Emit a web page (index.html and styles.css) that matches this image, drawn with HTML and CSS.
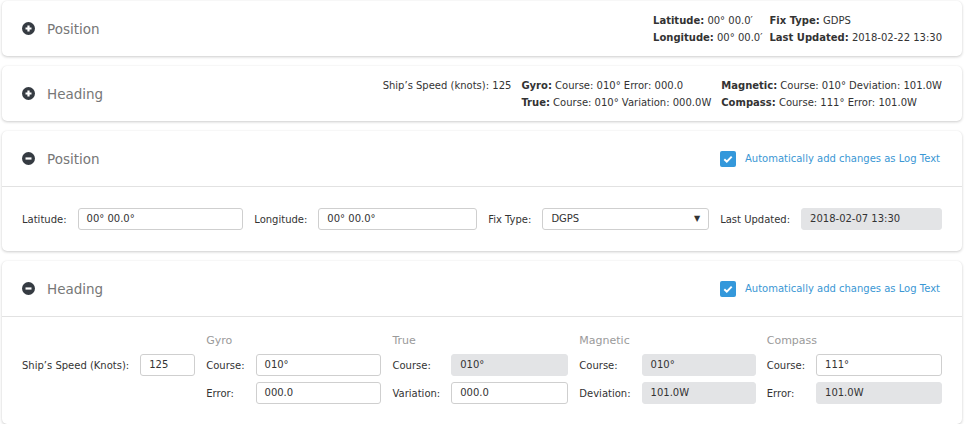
FILE: index.html
```html
<!DOCTYPE html>
<html>
<head>
<meta charset="utf-8">
<link rel="stylesheet" href="styles.css">
</head>
<body>
<div class="page">

  <section class="card">
    <header class="card-head">
      <div class="title">
        <svg class="toggle" width="13" height="13" viewBox="0 0 13 13"><circle cx="6.5" cy="6.5" r="6.5" fill="#353b42"/><path d="M3.5 6.5h6M6.5 3.5v6" stroke="#fff" stroke-width="2.2"/></svg>
        <h2>Position</h2>
      </div>
      <div class="summary pos-summary">
        <div><b>Latitude:</b> 00° 00.0′</div>
        <div><b>Fix Type:</b> GDPS</div>
        <div><b>Longitude:</b> 00° 00.0′</div>
        <div><b>Last Updated:</b> 2018-02-22 13:30</div>
      </div>
    </header>
  </section>

  <section class="card">
    <header class="card-head">
      <div class="title">
        <svg class="toggle" width="13" height="13" viewBox="0 0 13 13"><circle cx="6.5" cy="6.5" r="6.5" fill="#353b42"/><path d="M3.5 6.5h6M6.5 3.5v6" stroke="#fff" stroke-width="2.2"/></svg>
        <h2>Heading</h2>
      </div>
      <div class="summary head-summary">
        <div>Ship’s Speed (knots): 125</div>
        <div><b>Gyro:</b> Course: 010° Error: 000.0</div>
        <div><b>Magnetic:</b> Course: 010° Deviation: 101.0W</div>
        <div></div>
        <div><b>True:</b> Course: 010° Variation: 000.0W</div>
        <div><b>Compass:</b> Course: 111° Error: 101.0W</div>
      </div>
    </header>
  </section>

  <section class="card">
    <header class="card-head open">
      <div class="title">
        <svg class="toggle" width="13" height="13" viewBox="0 0 13 13"><circle cx="6.5" cy="6.5" r="6.5" fill="#353b42"/><path d="M3.5 6.5h6" stroke="#fff" stroke-width="2.2"/></svg>
        <h2>Position</h2>
      </div>
      <label class="auto-log">
        <span class="check"><svg width="16" height="16" viewBox="0 0 16 16"><path d="M4.3 8.2l2.5 2.4 4.9-5" fill="none" stroke="#fff" stroke-width="2"/></svg></span>
        Automatically add changes as Log Text
      </label>
    </header>
    <div class="card-body pos-form">
      <span class="lbl">Latitude:</span>
      <div class="field">00° 00.0°</div>
      <span class="lbl">Longitude:</span>
      <div class="field">00° 00.0°</div>
      <span class="lbl">Fix Type:</span>
      <div class="field select">DGPS<span class="caret">▼</span></div>
      <span class="lbl">Last Updated:</span>
      <div class="field ro">2018-02-07 13:30</div>
    </div>
  </section>

  <section class="card">
    <header class="card-head open">
      <div class="title">
        <svg class="toggle" width="13" height="13" viewBox="0 0 13 13"><circle cx="6.5" cy="6.5" r="6.5" fill="#353b42"/><path d="M3.5 6.5h6" stroke="#fff" stroke-width="2.2"/></svg>
        <h2>Heading</h2>
      </div>
      <label class="auto-log">
        <span class="check"><svg width="16" height="16" viewBox="0 0 16 16"><path d="M4.3 8.2l2.5 2.4 4.9-5" fill="none" stroke="#fff" stroke-width="2"/></svg></span>
        Automatically add changes as Log Text
      </label>
    </header>
    <div class="card-body head-form">
      <span class="spacer"></span>
      <span class="grp">Gyro</span>
      <span class="grp">True</span>
      <span class="grp">Magnetic</span>
      <span class="grp">Compass</span>

      <span class="lbl">Ship’s Speed (Knots):</span>
      <div class="field">125</div>
      <span class="lbl">Course:</span>
      <div class="field">010°</div>
      <span class="lbl">Course:</span>
      <div class="field ro">010°</div>
      <span class="lbl">Course:</span>
      <div class="field ro">010°</div>
      <span class="lbl">Course:</span>
      <div class="field">111°</div>

      <span class="spacer"></span>
      <span class="lbl">Error:</span>
      <div class="field">000.0</div>
      <span class="lbl">Variation:</span>
      <div class="field">000.0</div>
      <span class="lbl">Deviation:</span>
      <div class="field ro">101.0W</div>
      <span class="lbl">Error:</span>
      <div class="field ro">101.0W</div>
    </div>
  </section>

</div>
</body>
</html>
```

FILE: styles.css
```css
* { box-sizing: border-box; }
html, body { margin: 0; background: #fff; }
body {
  font-family: "DejaVu Sans", Verdana, sans-serif;
  font-size: 10px;
  color: #333;
}
.page {
  display: flex;
  flex-direction: column;
  gap: 10px;
  padding: 1px 3px 0 2px;
}
.card {
  background: #fff;
  border-radius: 5px;
  box-shadow: 0 1px 3px rgba(0, 0, 0, 0.2), 0 0 1px rgba(0, 0, 0, 0.06);
}
.card-head {
  height: 55px;
  display: flex;
  align-items: center;
  justify-content: space-between;
  padding: 0 20px 0 20px;
}
.card-head.open { height: 56px; border-bottom: 1px solid #e2e2e2; }
.title { display: flex; align-items: center; gap: 12px; }
.toggle { display: block; }
.title h2 {
  margin: 0;
  font-size: 13.5px;
  font-weight: normal;
  color: #777;
}
.summary {
  display: grid;
  column-gap: 7px;
  line-height: 17px;
  font-size: 10px;
}
.summary b { font-weight: bold; }
.pos-summary { grid-template-columns: auto auto; }
.head-summary { grid-template-columns: auto auto auto; column-gap: 10px; }

.auto-log {
  display: flex;
  align-items: center;
  gap: 9px;
  color: #3a97d4;
  font-size: 10px;
  margin-right: 2px;
}
.check {
  width: 16px;
  height: 16px;
  border-radius: 2px;
  background: #3498db;
  display: block;
}
.check svg { display: block; }

.card-body { padding: 21px 20px 21px 20px; }
.pos-form {
  display: grid;
  grid-template-columns: auto 167fr auto 160fr auto 168fr auto 142fr;
  column-gap: 11px;
  align-items: center;
}
.head-form {
  padding-top: 15px;
  padding-bottom: 20px;
  display: grid;
  grid-template-columns: auto 55px auto 128fr auto 119fr auto 116fr auto 128fr;
  grid-template-rows: 16px 22px 22px;
  column-gap: 11px;
  row-gap: 6px;
  align-items: center;
}
.spacer { grid-column: span 2; }
.lbl { white-space: nowrap; }
.grp {
  grid-column: span 2;
  color: #9a9a9a;
  font-size: 11px;
  white-space: nowrap;
}
.field {
  height: 22px;
  line-height: 20px;
  border: 1px solid #cfcfcf;
  border-radius: 3px;
  padding: 0 8px;
  background: #fff;
  white-space: nowrap;
}
.field.ro {
  background: #e3e4e6;
  border-color: #e3e4e6;
}
.field.select {
  display: flex;
  justify-content: space-between;
  align-items: center;
  padding-right: 8px;
}
.caret { font-size: 8px; color: #333; }
```
